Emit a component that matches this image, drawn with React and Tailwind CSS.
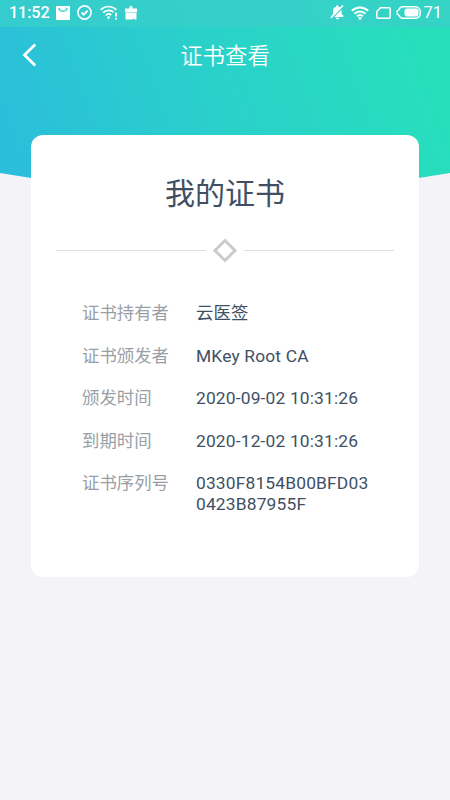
const details = [
  { label: '证书持有者', value: '云医签' },
  { label: '证书颁发者', value: 'MKey Root CA' },
  { label: '颁发时间', value: '2020-09-02 10:31:26' },
  { label: '到期时间', value: '2020-12-02 10:31:26' },
  { label: '证书序列号', value: '0330F8154B00BFD030423B87955F' },
];

function StatusBar() {
  return (
    <div className="h-[27px] pl-[9px] pr-[8px] pb-[2px] flex items-center justify-between bg-[#3acfca]/75 text-white">
      <div className="flex items-center">
        <span className="w-[47px] text-[16.2px] leading-[25px] font-medium tracking-[-0.1px]">11:52</span>
        {/* Mail */}
        <svg className="w-[14px] h-[14px]" viewBox="0 0 14 14" fill="none">
          <path d="M0 0h14v14H0z" fill="currentColor" />
          <path d="M3 2c.3 2 1.900 3.200 4 3.200S10.700 4 11 2" stroke="#37cecb" strokeWidth="1.500" />
        </svg>
        {/* Check */}
        <svg className="w-[15px] h-[15px] ml-[7px]" viewBox="0 0 15 15" fill="none" stroke="currentColor">
          <circle cx="7.500" cy="7.500" r="6.600" strokeWidth="1.600" />
          <path d="m4.600 7.500 2.100 2.100 3.900-4" strokeWidth="1.800" />
        </svg>
        {/* Wifi with warning */}
        <svg className="w-[18px] h-[15px] ml-[8px]" viewBox="0 0 18 15" fill="none" stroke="currentColor" strokeWidth="1.700">
          <path d="M.7 4.800C5.200.400 11.800.400 16.300 4.800M3.200 7.700c3-3 7.600-3 10.300-.5M5.700 10.300c1.800-1.700 3.900-1.700 5.600-.2" />
          <circle cx="8.500" cy="12.600" r="1.300" fill="currentColor" stroke="none" />
          <path d="M16 7.500v4M16 12.700v1.800" strokeWidth="1.800" />
        </svg>
        {/* Package */}
        <svg className="w-[12px] h-[14px] ml-[7px]" viewBox="0 0 12 14" fill="currentColor">
          <path d="M4.500 2.500V.8L5.500 0h1l1 .8v1.700H12v3.700H0V2.500zM.5 6.800h11v6.600H9.700L8.600 12.400l-1.200 1H.5z" />
        </svg>
      </div>
      <div className="flex items-center">
        {/* Muted bell */}
        <svg className="w-[15px] h-[15px]" viewBox="0 0 15 15">
          <path fill="currentColor" d="M1.500 12v-1.500L3 9V6c0-2.500 1.300-3.900 3.200-4.300V.6h2.200v1.100c1.900.4 3.200 1.800 3.200 4.300v3l1.700 1.500V12zM5.600 12.800h3.500c-.2 1-.8 1.500-1.700 1.500s-1.600-.5-1.800-1.500" />
          <path d="M1.500 13.700 13.700 1.100" stroke="#37cecb" strokeWidth="1.600" />
          <path d="M.8 13 13 .4" stroke="currentColor" strokeWidth="1.500" />
        </svg>
        {/* Wifi */}
        <svg className="w-[18px] h-[14px] ml-[6px]" viewBox="0 0 18 14" fill="none" stroke="currentColor" strokeWidth="1.900">
          <path d="M.8 4.800c4.700-4.500 11.700-4.500 16.400 0M3.500 7.700c3.100-3 7.900-3 11 0M6 10.300c1.700-1.700 4.300-1.700 6 0" />
          <circle cx="9" cy="12.200" r="1.500" fill="currentColor" stroke="none" />
        </svg>
        {/* Sim */}
        <svg className="w-[15px] h-[12px] ml-[7px]" viewBox="0 0 15 12" fill="none" stroke="currentColor" strokeWidth="1.500">
          <path d="M4.500.8h8.500a1.200 1.200 0 0 1 1.200 1.200v8a1.200 1.200 0 0 1-1.200 1.200H2A1.200 1.200 0 0 1 .8 10V4.500z" />
        </svg>
        {/* Battery */}
        <svg className="w-[25px] h-[13px] ml-[5px]" viewBox="0 0 25 13">
          <path fill="none" stroke="currentColor" strokeWidth="1.400" d="M7 .8h12.500a4.800 4.800 0 0 1 4.800 4.800v1.800a4.800 4.800 0 0 1-4.800 4.800H7a4.500 4.500 0 0 1-4.200-3.200l-1.700-1V5l1.700-1A4.500 4.500 0 0 1 7 .8z" />
          <rect x="8.500" y="2.500" width="14" height="8" rx="2.500" fill="currentColor" />
        </svg>
        <span className="ml-[2px] text-[16.5px] leading-[25px]">71</span>
      </div>
    </div>
  );
}

export default function App() {
  return (
    <div className="min-h-screen flex flex-col bg-[#f3f3f8] font-[Roboto,'Noto_Sans_CJK_SC',sans-serif]">
      <header className="h-[209px] bg-[linear-gradient(70deg,#2bbedb_6%,#2ad1ca_50%,#27dfbb_92%)] [clip-path:polygon(0_0,100%_0,100%_173px,50%_100%,0_173px)]">
        <StatusBar />
        <nav className="h-14 px-[22px] grid grid-cols-[1fr_auto_1fr] items-center text-white">
          <button aria-label="返回">
            <svg className="w-[15px] h-[24px]" viewBox="0 0 15 24" fill="none" stroke="currentColor" strokeWidth="2.800">
              <path d="M13.200 1.500 2.500 12l10.700 10.500" />
            </svg>
          </button>
          <h1 className="pt-[3px] text-[22.4px] font-[350]">证书查看</h1>
        </nav>
      </header>

      <main className="relative -mt-[74px] mx-[31px] h-[442px] pt-[36px] rounded-[12px] bg-white text-[#405064]">
        <h2 className="text-[30px] leading-[46px] text-center">我的证书</h2>

        {/* Divider */}
        <div className="mt-5 px-[25px] flex items-center justify-center">
          <span className="h-px flex-1 bg-[#dedede]" />
          <svg className="w-[26px] h-[26px] mx-[6px]" viewBox="0 0 26 26" fill="none" stroke="#cbcbcb" strokeWidth="3">
            <path d="m13 3.500 10 10-10 10-10-10z" />
          </svg>
          <span className="h-px flex-1 bg-[#dedede]" />
        </div>

        <dl className="mt-10 pl-[51px] flex flex-col gap-[22px] text-[17.4px] leading-[20.5px]">
          {details.map(({ label, value }) => (
            <div key={label} className="flex">
              <dt className="w-[114px] shrink-0 text-[#999fa7]">{label}</dt>
              <dd className="w-[176px] break-all tracking-[0.16px]">{value}</dd>
            </div>
          ))}
        </dl>
      </main>
    </div>
  );
}
